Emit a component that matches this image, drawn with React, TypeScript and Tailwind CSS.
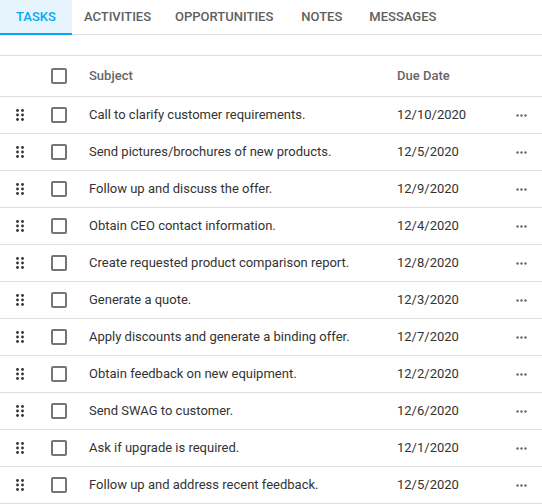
import { useState } from 'react';

const tabs = [
  { label: 'Tasks', pad: 'px-4' },
  { label: 'Activities', pad: 'px-3' },
  { label: 'Opportunities', pad: 'pl-3 pr-[14px]' },
  { label: 'Notes', pad: 'pl-[14px] pr-[13px]' },
  { label: 'Messages', pad: 'pl-[14px] pr-3' },
];

const tasks = [
  { id: 1, subject: 'Call to clarify customer requirements.', due: '12/10/2020' },
  { id: 2, subject: 'Send pictures/brochures of new products.', due: '12/5/2020' },
  { id: 3, subject: 'Follow up and discuss the offer.', due: '12/9/2020' },
  { id: 4, subject: 'Obtain CEO contact information.', due: '12/4/2020' },
  { id: 5, subject: 'Create requested product comparison report.', due: '12/8/2020' },
  { id: 6, subject: 'Generate a quote.', due: '12/3/2020' },
  { id: 7, subject: 'Apply discounts and generate a binding offer.', due: '12/7/2020' },
  { id: 8, subject: 'Obtain feedback on new equipment.', due: '12/2/2020' },
  { id: 9, subject: 'Send SWAG to customer.', due: '12/6/2020' },
  { id: 10, subject: 'Ask if upgrade is required.', due: '12/1/2020' },
  { id: 11, subject: 'Follow up and address recent feedback.', due: '12/5/2020' },
];

function DragHandle() {
  return (
    <svg width="8" height="12" viewBox="0 0 8 12" className="text-[#333]">
      <circle cx="1.5" cy="1.5" r="1.4" fill="currentColor" />
      <circle cx="6.5" cy="1.5" r="1.4" fill="currentColor" />
      <circle cx="1.5" cy="6" r="1.4" fill="currentColor" />
      <circle cx="6.5" cy="6" r="1.4" fill="currentColor" />
      <circle cx="1.5" cy="10.5" r="1.4" fill="currentColor" />
      <circle cx="6.5" cy="10.5" r="1.4" fill="currentColor" />
    </svg>
  );
}

function Dots() {
  return (
    <svg width="11" height="3" viewBox="0 0 11 3" className="text-[#666]">
      <circle cx="1.5" cy="1.5" r="1.2" fill="currentColor" />
      <circle cx="5.5" cy="1.5" r="1.2" fill="currentColor" />
      <circle cx="9.5" cy="1.5" r="1.2" fill="currentColor" />
    </svg>
  );
}

function CheckBox() {
  return <div className="w-4 h-4 rounded-[2px] border-2 border-[#757575] bg-white" />;
}

export default function App() {
  const [active, setActive] = useState(0);

  return (
    <div className="w-[542px] h-[504px] overflow-hidden bg-white text-[13px] text-[#333] font-['Roboto',sans-serif]">
      {/* Tabs */}
      <div className="flex h-[35px] border-b border-[#ddd]">
        {tabs.map((tab, i) => (
          <div
            key={tab.label}
            onClick={() => setActive(i)}
            className={`${tab.pad} flex items-center uppercase font-medium text-[13px] cursor-pointer border-b-2 -mb-px ${
              i === active ? 'bg-[#e6f5fd] text-[#03a9f4] border-[#03a9f4]' : 'text-[#606060] border-transparent'
            }`}
          >
            {tab.label}
          </div>
        ))}
      </div>

      {/* Toolbar spacer */}
      <div className="h-[21px] border-b border-[#ddd]" />

      {/* Header */}
      <div className="flex items-center h-[41px] border-b border-[#ddd] text-[#666] font-medium text-[13px]">
        <div className="w-[40px]" />
        <div className="w-[38px] flex justify-center">
          <CheckBox />
        </div>
        <div className="w-[308px] pl-[11px]">Subject</div>
        <div className="w-[110px] pl-[11px]">Due Date</div>
        <div className="flex-1" />
      </div>

      {/* Rows */}
      {tasks.map((task) => (
        <div key={task.id} className="flex items-center h-[37px] border-b border-[#ddd]">
          <div className="w-[40px] flex justify-center">
            <DragHandle />
          </div>
          <div className="w-[38px] flex justify-center">
            <CheckBox />
          </div>
          <div className="w-[308px] pl-[11px] truncate">{task.subject}</div>
          <div className="w-[110px] pl-[11px]">{task.due}</div>
          <div className="flex-1 flex justify-end pr-[15px]">
            <Dots />
          </div>
        </div>
      ))}
    </div>
  );
}
